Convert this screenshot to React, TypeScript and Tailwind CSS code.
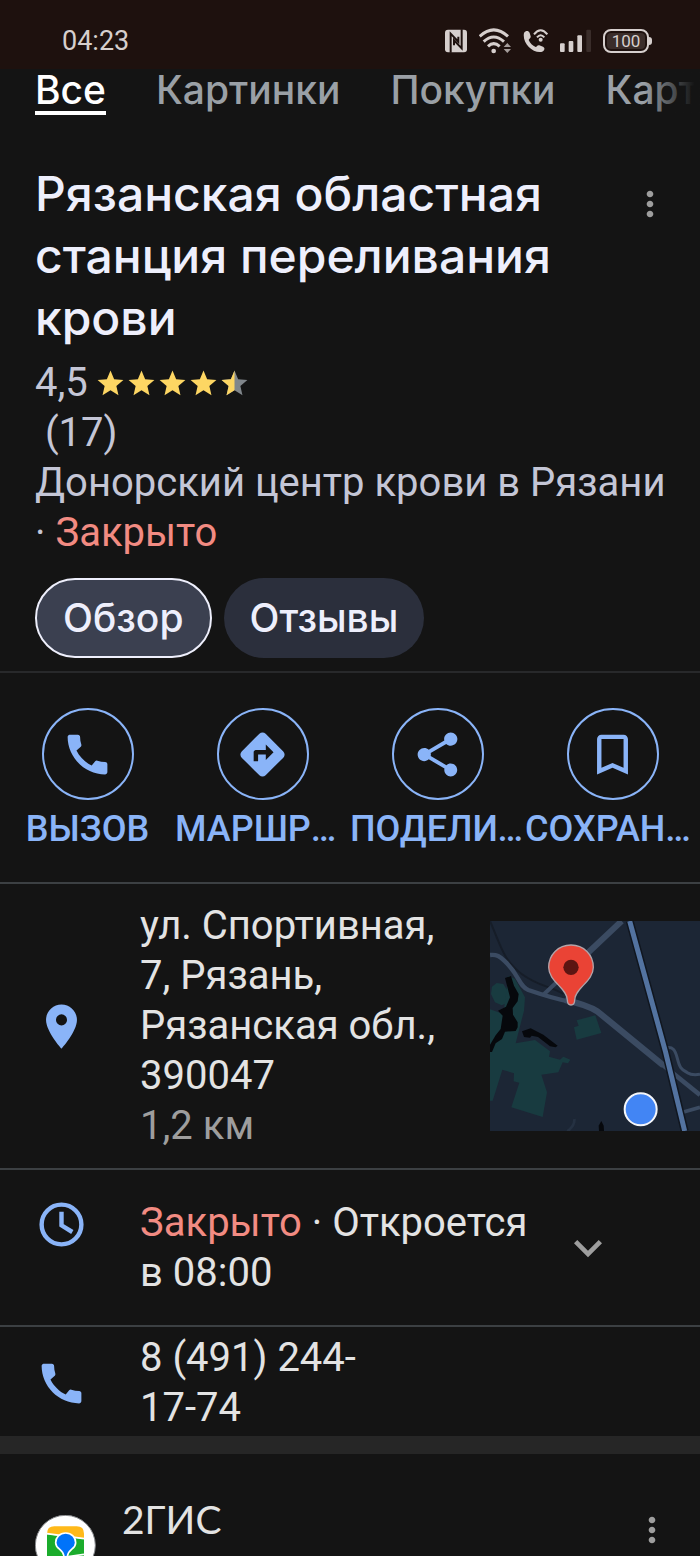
import clsx from "clsx"
import {
    MdBookmarkBorder,
    MdCall,
    MdDirections,
    MdExpandMore,
    MdLocationOn,
    MdMoreVert,
    MdShare,
} from "react-icons/md"

const tabs = ["Все", "Картинки", "Покупки", "Карты"]

const actions = [
    { label: "ВЫЗОВ", icon: MdCall },
    { label: "МАРШРУТЫ", icon: MdDirections },
    { label: "ПОДЕЛИТЬСЯ", icon: MdShare },
    { label: "СОХРАНИТЬ", icon: MdBookmarkBorder },
]

const StatusBar = () => (
    <div className="flex h-[69px] items-center justify-between bg-[#1e110e] pt-3 pr-12 pl-[62px] text-[#d6cfcd]">
        <time className="text-[27px] leading-8">04:23</time>
        <div className="flex items-center gap-3">
            {/* nfc */}
            <svg width="22" height="24" viewBox="0 0 66 70">
                <rect x="0" y="1" width="66" height="68" rx="9" fill="currentColor" />
                <path d="M17 70V13L40 37V22M50 0V57L27 33V48" fill="none" stroke="#1e110e" strokeWidth="6" />
            </svg>
            {/* wifi */}
            <svg width="32" height="26" viewBox="0 0 96 78">
                <g fill="none" stroke="currentColor" strokeWidth="9">
                    <path d="M2 25Q44 -14 87 25" />
                    <path d="M14 41Q44 13 75 41" />
                    <path d="M27 55Q44 39 62 55" />
                </g>
                <circle cx="44" cy="69" r="7" fill="currentColor" />
                <path d="M74 57L85 45L96 57ZM74 63L85 75L96 63Z" fill="#a59d9b" />
            </svg>
            {/* wi-fi calling */}
            <svg width="25" height="24" viewBox="0 0 75 72">
                <path d="M3 12C8 5 16 4 20 12L23 22C24 28 18 29 17 33C21 43 29 50 38 54C42 53 43 47 49 49L60 53C68 57 64 67 55 69C28 73 -3 42 3 12Z" fill="currentColor" />
                <g fill="none" stroke="currentColor" strokeWidth="6">
                    <path d="M33 16Q53 -8 73 16" />
                    <path d="M42 25Q53 12 64 25" />
                </g>
                <circle cx="53" cy="32" r="6" fill="currentColor" />
            </svg>
            {/* signal */}
            <svg width="31" height="24" viewBox="0 0 93 70">
                <rect x="0" y="42" width="14" height="26" rx="3" fill="currentColor" />
                <rect x="26" y="35" width="14" height="33" rx="3" fill="currentColor" />
                <rect x="52" y="18" width="14" height="50" rx="3" fill="currentColor" />
                <rect x="79" y="1" width="14" height="67" rx="3" fill="#3a2d2a" />
            </svg>
            {/* battery */}
            <div className="flex items-center">
                <div className="rounded-lg border-2 border-current p-[2px]">
                    <div className="flex h-4 w-[38px] items-center justify-center rounded-sm bg-[#3a2d2a] text-[17px] leading-4">100</div>
                </div>
                <div className="h-2 w-[3px] rounded-r-sm bg-current" />
            </div>
        </div>
    </div>
)

const Star = ({ half }: { half?: boolean }) => (
    <svg width="31" height="31" viewBox="0 0 24 24">
        <path
            d="M12 17.27L18.18 21l-1.64-7.03L22 9.24l-7.19-.61L12 2 9.19 8.63 2 9.24l5.46 4.73L5.82 21z"
            fill={half ? "#80868b" : "#fdd663"}
        />
        {half && <path d="M12 17.27V2L9.19 8.63 2 9.24l5.46 4.73L5.82 21z" fill="#fdd663" />}
    </svg>
)

const ClockIcon = () => (
    <svg width="53" height="53" viewBox="0 0 24 24" fill="none" stroke="currentColor" strokeWidth="2">
        <circle cx="12" cy="12" r="9" />
        <path d="M12 6.2V12.4L16.9 15.4" />
    </svg>
)

const MapPreview = () => (
    <svg className="size-[210px]" viewBox="30 31 630 630" role="img" aria-label="Карта">
        <rect x="30" y="31" width="630" height="630" fill="#1c2635" />
        <path d="M30 31C60 100 70 150 125 190S210 225 250 250" fill="none" stroke="#161d28" strokeWidth="6" />
        <g fill="#183b40">
            <path d="M36 228L50 217L70 220L88 250L86 275L65 284L45 275L33 250Z" />
            <path d="M85 195L105 205L135 260L132 300L107 398L165 388L210 422L207 438L240 447L250 438L271 447L264 458L248 455L235 485L184 492L201 545L188 619L94 590L118 516L101 512L102 488L67 477L38 570L30 570V296L70 310Z" />
            <path d="M290 329L346 314L364 367L290 387L282 350L296 345Z" />
        </g>
        <g fill="#06080c">
            <path d="M75 202L93 196L102 225L116 250L113 272L98 292L99 312L113 335V350L107 361L75 363L66 385L47 398L36 424H30V402L47 374L62 355L68 315L54 300L78 288L90 260Z" />
            <path d="M126 362L152 353L190 372L233 405L227 410L210 407L174 379L155 375L150 381L132 379Z" />
            <path d="M357 661L356 645L364 631L371 645L372 661Z" />
        </g>
        <path d="M283 625Q285 645 262 662" fill="none" stroke="#253142" strokeWidth="8" />
        <g fill="none" stroke="#3b4b62" strokeLinejoin="round">
            <path d="M425 31L320 130" strokeWidth="18" />
            <path d="M320 130L190 252" strokeWidth="12" />
            <path d="M30 133C50 130 60 138 75 152C120 195 115 225 145 238C180 250 225 265 270 273" strokeWidth="13" />
            <path d="M255 268C300 278 330 288 352 302L550 464" strokeWidth="19" />
            <path d="M500 424L660 553" strokeWidth="14" />
            <path d="M555 412C580 405 586 420 592 443C600 475 605 475 622 486Q635 495 660 491" strokeWidth="9" />
            <path d="M608 605L660 590" strokeWidth="11" />
        </g>
        <path d="M449 31L557 425L614 661" fill="none" stroke="#10161f" strokeWidth="24" />
        <path d="M449 31L557 425L614 661" fill="none" stroke="#5373a0" strokeWidth="15" />
        <path d="M273 103C235 103 206 132 206 170C206 212 261 232 262 268Q262 283 273 283T284 268C285 232 340 212 340 170C340 132 311 103 273 103Z" fill="#ea4335" stroke="#b3a3a8" strokeWidth="4" />
        <circle cx="273" cy="170" r="23" fill="#5c1512" />
        <circle cx="482" cy="596" r="48" fill="#4285f4" stroke="#f4f6fa" strokeWidth="6" />
    </svg>
)

const GisLogo = () => (
    <svg className="size-[61px]" viewBox="0 0 183 183" aria-hidden="true">
        <circle cx="91" cy="91" r="90" fill="#fff" stroke="#85878a" strokeWidth="3" />
        <path d="M36 58V56Q36 34 58 34H125Q147 34 147 56V70Z" fill="#ffb919" />
        <path d="M36 58L147 72V125Q147 147 125 147H58Q36 147 36 125Z" fill="#1bac2c" />
        <path d="M36 56L147 71M91 126L147 118" stroke="#fff" strokeWidth="5" />
        <path d="M92 54C74 54 62 67 62 83C62 104 86 101 87 126V147H97V126C98 101 122 104 122 83C122 67 110 54 92 54Z" fill="#0073f9" stroke="#fff" strokeWidth="5" />
    </svg>
)

const MoreButton = ({ className }: { className?: string }) => (
    <button type="button" aria-label="Ещё" className={clsx("size-10 shrink-0 text-[#9e9e9e]", className)}>
        <MdMoreVert size={40} />
    </button>
)

export default function App() {
    return (
        <div className="h-screen overflow-hidden bg-[#141414] font-['Roboto',sans-serif] text-[40px] leading-[50px] text-[#e3e3e3]">
            <StatusBar />

            <nav className="relative overflow-hidden">
                <div className="flex gap-[50px] pl-[35px] font-['Inter',sans-serif] text-[39px] leading-[42px] font-medium text-[#9aa0a6]">
                    {tabs.map((tab, i) => (
                        <a
                            key={tab}
                            href="#"
                            className={clsx("shrink-0 border-b-4", i === 0 ? "border-white text-white" : "border-transparent")}
                        >
                            {tab}
                        </a>
                    ))}
                </div>
                <div className="absolute inset-y-0 right-0 w-14 bg-linear-to-r from-transparent to-[#141414] to-90%" />
            </nav>

            <header className="mt-12 pr-[30px] pl-[35px]">
                <div className="flex items-start justify-between">
                    <h1 className="max-w-[560px] font-['Inter',sans-serif] text-[48px] leading-[62px] font-medium text-[#eeeffc]">
                        Рязанская областная станция переливания крови
                    </h1>
                    <MoreButton className="mt-[21px]" />
                </div>
                <div className="mt-[9px] text-[#c4c6d6]">
                    <div className="flex items-center gap-[7px]">
                        <span>4,5</span>
                        <span className="flex" role="img" aria-label="4,5 из 5">
                            <Star />
                            <Star />
                            <Star />
                            <Star />
                            <Star half />
                        </span>
                    </div>
                    <p>&nbsp;(17)</p>
                    <p>
                        Донорский центр крови в&nbsp;Рязани ·&nbsp;<span className="text-[#f28b82]">Закрыто</span>
                    </p>
                </div>
            </header>

            <div className="mt-5 flex gap-3 border-b-2 border-[#28292b] px-[35px] pb-[13px] font-['Inter',sans-serif] text-[39px] font-medium text-[#eeeffc]">
                <button type="button" className="h-20 rounded-full border-2 border-[#eeeffc] bg-[#3b4050] px-[26px]">Обзор</button>
                <button type="button" className="h-20 rounded-full bg-[#2b2f3c] px-[26px]">Отзывы</button>
            </div>

            <div className="grid grid-cols-4 border-b-2 border-[#3c4043] pt-[35px] pb-[31px] text-[#8ab4f8]">
                {actions.map(({ label, icon: Icon }) => (
                    <button key={label} type="button" className="flex min-w-0 flex-col items-center gap-[7px]">
                        <span className="flex size-[92px] items-center justify-center rounded-full border-2 border-current">
                            <Icon size={53} />
                        </span>
                        <span className="max-w-full truncate text-[36px] leading-[44px] font-medium">{label}</span>
                    </button>
                ))}
            </div>

            <section className="flex items-center border-b-2 border-[#3c4043] py-[17px]">
                <div className="w-[140px] shrink-0 pl-[35px] text-[#8ab4f8]">
                    <MdLocationOn size={53} />
                </div>
                <div className="flex-1 pr-[35px]">
                    <p>ул. Спортивная, 7, Рязань, Рязанская обл., 390047</p>
                    <p className="text-[#9e9e9e]">1,2 км</p>
                </div>
                <MapPreview />
            </section>

            <section className="flex items-center border-b-2 border-[#3c4043] pt-7 pr-[84px] pb-[27px]">
                <div className="w-[140px] shrink-0 self-start pl-[35px] text-[#8ab4f8]">
                    <ClockIcon />
                </div>
                <p className="flex-1 pr-3">
                    <span className="text-[#f28b82]">Закрыто</span> · Откроется в&nbsp;08:00
                </p>
                <button type="button" aria-label="Показать часы работы" className="text-[#9e9e9e]">
                    <MdExpandMore size={56} />
                </button>
            </section>

            <section className="flex items-center border-b-18 border-[#262626] pt-[6px] pb-[3px]">
                <div className="w-[140px] shrink-0 pl-[35px] text-[#8ab4f8]">
                    <MdCall size={53} />
                </div>
                <a href="tel:84912441774" className="max-w-[245px]">8 (491) 244-17-74</a>
            </section>

            <article className="flex items-start pt-10 pr-7 pl-[35px]">
                <div className="mt-[21px]">
                    <GisLogo />
                </div>
                <h2 className="ml-[26px] flex-1 font-['Lato',sans-serif] text-[39px]">2ГИС</h2>
                <MoreButton className="mt-4" />
            </article>
        </div>
    )
}
